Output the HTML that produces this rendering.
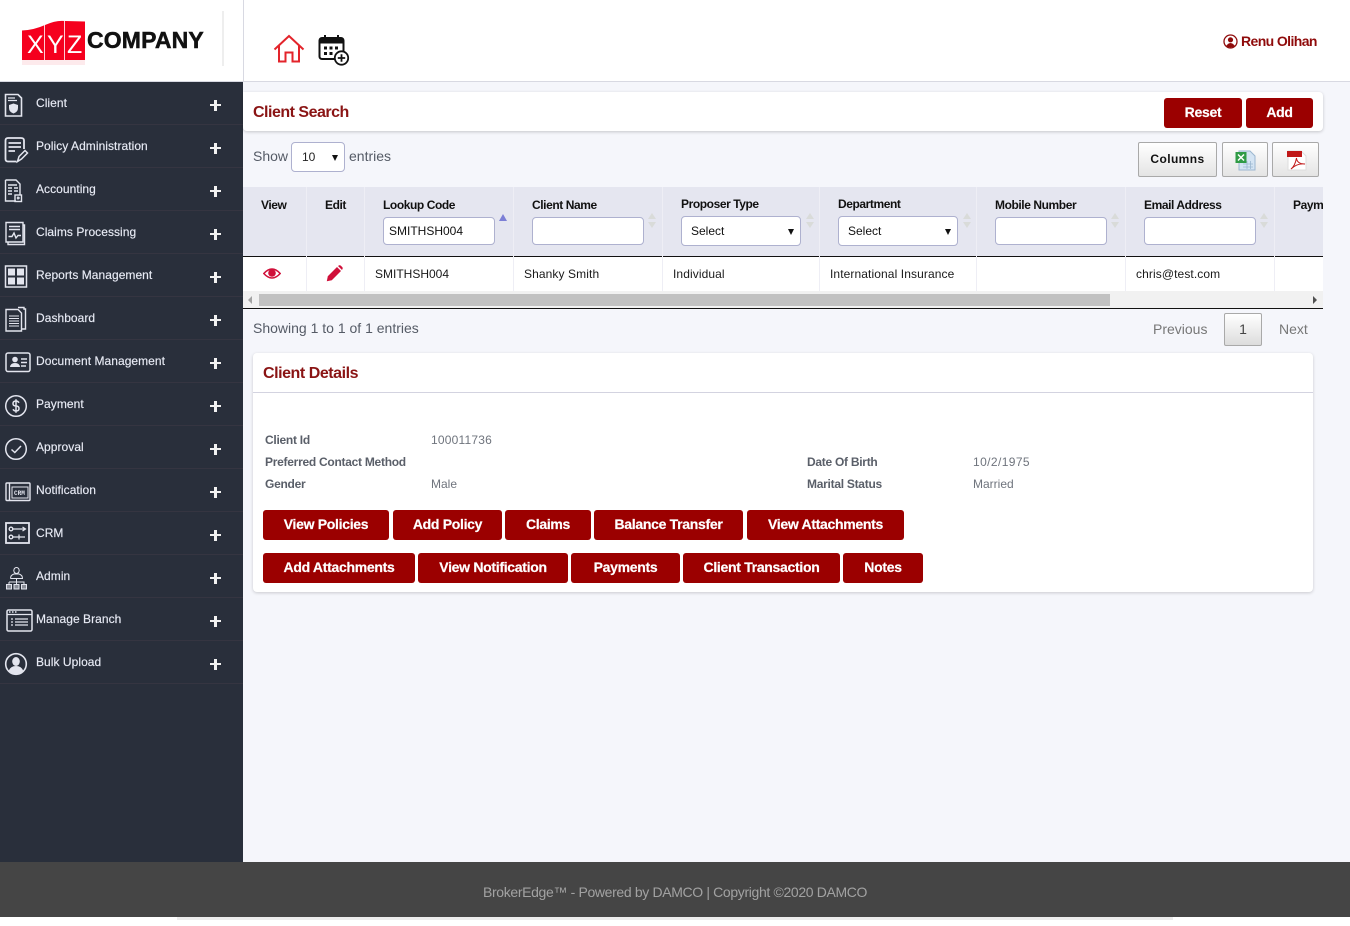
<!DOCTYPE html>
<html><head><meta charset="utf-8"><title>Client Search</title>
<style>
*{box-sizing:border-box}
html,body{margin:0;padding:0;width:1350px;height:926px;overflow:hidden;background:#fff;font-family:"Liberation Sans",sans-serif}
.a{position:absolute;white-space:nowrap}
#main{position:absolute;left:243px;top:82px;width:1107px;height:780px;background:#f5f6fb}
#side{position:absolute;left:0;top:82px;width:243px;height:780px;background:#292f3b}
.row{position:absolute;left:0;width:243px;height:43px;border-bottom:1px solid #353541}
.row span.t{position:absolute;left:36px;top:13px;font-size:12px;line-height:16px;color:#e8ebf5;white-space:nowrap;letter-spacing:.05px;-webkit-text-stroke:.15px #e8ebf5}
.row svg.i{position:absolute;left:4px;top:9px;width:24px;height:26px;fill:none;stroke:#e3e5ee;stroke-width:1.4;overflow:visible}
.plus{position:absolute;left:210px;top:18px;width:11px;height:11px}
.plus:before{content:"";position:absolute;left:0;top:4px;width:11px;height:2.4px;background:#f2f2f2}
.plus:after{content:"";position:absolute;left:4.3px;top:0;width:2.4px;height:11px;background:#f2f2f2}
.btn{position:absolute;height:30px;background:#9b0000;border-radius:3px;color:#fff;font-weight:bold;font-size:14px;line-height:29px;text-align:center;white-space:nowrap;letter-spacing:-.3px;-webkit-text-stroke:.2px #fff}
.gbtn{position:absolute;top:142px;height:35px;border:1px solid #a9a9a9;border-radius:2px;background:linear-gradient(#fff,#e4e4e4);text-align:center;font-size:12px;font-weight:bold;line-height:33px;color:#111;letter-spacing:.4px}
.th{position:absolute;font-size:12px;font-weight:bold;color:#111;white-space:nowrap;line-height:14px;letter-spacing:-.42px}
.vl{position:absolute;width:1px;background:#eeeef5}
.inp{position:absolute;height:28px;width:112px;top:217px;background:#fff;border:1px solid #aeb1cf;border-radius:4px;font-size:12px;line-height:26px;padding-left:5px;color:#111}
.sel{position:absolute;height:30px;width:120px;top:216px;background:#fff;border:1px solid #aeb1cf;border-radius:4px;font-size:12px;line-height:28px;padding-left:9px;color:#111}
.sel:after,.s10:after{content:"";position:absolute;right:6px;top:12px;border-left:3.5px solid transparent;border-right:3.5px solid transparent;border-top:6px solid #111}
.sort{position:absolute;width:8px;height:16px;top:213px}
.sort:before{content:"";position:absolute;left:0;top:0;border-left:4px solid transparent;border-right:4px solid transparent;border-bottom:6px solid #d9dbd9}
.sort:after{content:"";position:absolute;left:0;top:9px;border-left:4px solid transparent;border-right:4px solid transparent;border-top:6px solid #d9dbd9}
.td{position:absolute;top:267px;font-size:12px;line-height:15px;color:#1a1a1a;white-space:nowrap;letter-spacing:.1px}
.lb{position:absolute;font-size:12px;font-weight:bold;color:#5a5f69;line-height:14px;white-space:nowrap;letter-spacing:-.27px}
.vv{position:absolute;font-size:12px;color:#6f747d;line-height:14px;white-space:nowrap}
</style></head><body>

<!-- header -->
<div class="a" style="left:0;top:81px;width:1350px;height:1px;background:#d8d9e2"></div>
<div class="a" style="left:243px;top:0;width:1px;height:81px;background:#d8d9e2"></div>
<div class="a" style="left:222px;top:11px;width:2px;height:55px;background:#eeeeee"></div>
<svg class="a" style="left:22px;top:20px" width="64" height="46" viewBox="0 0 64 46">
<path d="M0 10.500Q12 10 23 5T43 1L63 1.500V40H0Z" fill="#f5001e"/>
<path d="M22.500 5V40M42.500 1V40" stroke="#fff" stroke-width=".8"/>
<rect x="0" y="40" width="63" height="5" fill="#fdeaec"/>
<text x="5" y="33" font-family="Liberation Sans" font-size="25" fill="#fff">X</text>
<text x="25" y="33" font-family="Liberation Sans" font-size="25" fill="#fff">Y</text>
<text x="45" y="33" font-family="Liberation Sans" font-size="25" fill="#fff">Z</text>
</svg>
<div class="a" style="left:87px;top:27px;font-size:23px;line-height:26px;font-weight:bold;color:#111;letter-spacing:.15px;-webkit-text-stroke:.5px #111">COMPANY</div>
<svg class="a" style="left:273px;top:34px" width="32" height="30" viewBox="0 0 32 30" fill="none" stroke="#e3242b" stroke-width="2">
<path d="M1.500 15.500L16 2L30.500 15.500M6 12V27.500H12.500V18.500H19.500V27.500H26V12"/></svg>
<svg class="a" style="left:318px;top:34px" width="32" height="32" viewBox="0 0 32 32">
<rect x="1.500" y="4" width="24" height="21" rx="2.500" fill="#fff" stroke="#111" stroke-width="2"/>
<rect x="1.500" y="4" width="24" height="5.500" fill="#111"/>
<path d="M7 1v5M20 1v5" stroke="#111" stroke-width="2"/>
<path d="M6 12.500h3v3h-3zM11.500 12.500h3v3h-3zM17 12.500h3v3h-3zM6 18h3v3h-3zM11.500 18h3v3h-3z" fill="#111"/>
<circle cx="23.500" cy="24" r="6.700" fill="#fff" stroke="#111" stroke-width="1.800"/>
<path d="M23.500 20.300v7.400M19.800 24h7.400" stroke="#111" stroke-width="1.800"/></svg>
<svg class="a" style="left:1223px;top:34px" width="15" height="15" viewBox="0 0 15 15">
<circle cx="7.500" cy="7.500" r="6.500" fill="#fff" stroke="#8f0b0b" stroke-width="1.300"/>
<circle cx="7.500" cy="5.800" r="2.600" fill="#8f0b0b"/><path d="M3 12q4.500-6 9 0q-4.500 3-9 0z" fill="#8f0b0b"/></svg>
<div class="a" style="left:1241px;top:33px;font-size:14px;line-height:16px;color:#8f0b0b;font-weight:bold;letter-spacing:-.6px">Renu Olihan</div>

<!-- sidebar -->
<div id="side">
<div class="row" style="top:0"><svg class="i" viewBox="0 0 24 26"><path d="M1.500 3.500H14L17.500 7V25H1.500Z" stroke-width="1.600"/><path d="M4 7h7M4 9.500h9" stroke-width="1.200"/><path d="M9.500 12.500l4.500 1.500v3q0 3.800-4.500 5.500q-4.500-1.700-4.500-5.500v-3z" fill="#e3e5ee" stroke="none"/></svg><span class="t">Client</span><i class="plus"></i></div>
<div class="row" style="top:43px"><svg class="i" style="top:12px" viewBox="0 0 24 26"><path d="M12.500 24.500H4Q1.500 24.500 1.500 22V3.500Q1.500 1 4 1H17Q20 1 20 3.500V12" stroke-width="1.800"/><path d="M4.500 6H17M4.500 10H17M4.500 14H11" stroke-width="1.700"/><path d="M13.500 24.500L15 19.500L21 13.500L23.500 16L17.500 22Z" stroke-width="1.500"/></svg><span class="t">Policy Administration</span><i class="plus"></i></div>
<div class="row" style="top:86px"><svg class="i" viewBox="0 0 24 26"><path d="M1.500 3H12L16 7V18M12 24H1.500V3" /><path d="M4 8h9M4 11h4M10 11h4M4 14h4M10 14h4M4 17h4"/><rect x="11" y="18" width="6.500" height="6.500"/><path d="M14 19.500v3M12.800 21h3"/></svg><span class="t">Accounting</span><i class="plus"></i></div>
<div class="row" style="top:129px"><svg class="i" viewBox="0 0 24 26"><path d="M2 2.500H19V22H2ZM19 5H20.500V24.500H4V22"/><path d="M5 6.500H16M5 9.500H16M4.500 16.500L8 16.500L10 13L12 18L14 15.500H17"/></svg><span class="t">Claims Processing</span><i class="plus"></i></div>
<div class="row" style="top:172px"><svg class="i" viewBox="0 0 24 26"><rect x="1.500" y="3" width="21" height="21" stroke-width="1.500"/><path d="M4 5.500h7v7H4zM13 5.500h7v7h-7zM4 14.500h7v7H4zM13 14.500h7v7h-7z" fill="#e3e5ee" stroke="none"/></svg><span class="t">Reports Management</span><i class="plus"></i></div>
<div class="row" style="top:215px"><svg class="i" viewBox="0 0 24 26"><path d="M2 3.500H14L17.500 7V25H2Z" stroke-width="1.400"/><path d="M14 1.500H20V3L21.500 3V23H17.500" /><path d="M5 10H15M5 12.500H15M5 15H15M5 17.500H15M5 20H15" stroke-width="1.100"/></svg><span class="t">Dashboard</span><i class="plus"></i></div>
<div class="row" style="top:258px"><svg class="i" style="left:5px;width:26px" viewBox="0 0 26 26"><rect x="1" y="4" width="24" height="18.500" rx="2" stroke-width="1.500"/><circle cx="10" cy="10.500" r="2.800" fill="#e3e5ee" stroke="none"/><path d="M5 18q.5-4 5-4t5 4z" fill="#e3e5ee" stroke="none"/><path d="M16 10H22M16 13.500H22M16 17H21" stroke-width="1.500"/></svg><span class="t">Document Management</span><i class="plus"></i></div>
<div class="row" style="top:301px"><svg class="i" style="left:5px" viewBox="0 0 24 26"><circle cx="11" cy="14" r="10.300" stroke-width="1.500"/><path d="M14 10.800Q13 9 11 9Q8 9 8 11.500T11 14T14 16.500T11 19Q9 19 8 17.200M11 7.300V20.700" stroke-width="1.500"/></svg><span class="t">Payment</span><i class="plus"></i></div>
<div class="row" style="top:344px"><svg class="i" style="left:5px" viewBox="0 0 24 26"><circle cx="11" cy="14" r="10.300" stroke-width="1.500"/><path d="M6.500 14.500L9.800 17.500L16 11" stroke-width="1.500"/></svg><span class="t">Approval</span><i class="plus"></i></div>
<div class="row" style="top:387px"><svg class="i" style="left:5px;width:26px" viewBox="0 0 26 26"><rect x="1" y="5" width="24" height="17.500" rx="1" stroke-width="1.400"/><path d="M4.500 5V22.500"/><rect x="7" y="9" width="16" height="11" stroke-width="1"/><text x="9" y="17" font-size="6" font-family="Liberation Mono" fill="#e3e5ee" stroke="none" font-weight="bold">CRM</text></svg><span class="t">Notification</span><i class="plus"></i></div>
<div class="row" style="top:430px"><svg class="i" style="left:5px;width:25px" viewBox="0 0 25 26"><rect x="1" y="2" width="23" height="20" stroke-width="1.800"/><circle cx="6" cy="8" r="1.800"/><circle cx="6" cy="16" r="1.800"/><path d="M8 8H20M17.500 6L20.500 8L17.500 10M8 16H20M14 13.500V18.500" stroke-width="1.200"/></svg><span class="t">CRM</span><i class="plus"></i></div>
<div class="row" style="top:473px"><svg class="i" viewBox="0 0 24 26" style="stroke-width:1"><path d="M12.500 3.500a2.700 3 0 1 1-.01 0zM6.500 14.500q0-3.500 3.500-4.500h5q3.500 1 3.500 4.500h-12M12.500 14.500V18M5 18H20V20M5 18V20M12.500 18V20"/><path d="M2.500 20.500H7.500V25H2.500ZM10 20.500H15V25H10ZM17.500 20.500H22.500V25H17.500Z" fill="#8a8e98"/></svg><span class="t">Admin</span><i class="plus"></i></div>
<div class="row" style="top:516px"><svg class="i" style="left:6px;width:26px" viewBox="0 0 26 26"><rect x="1" y="3" width="25" height="21" rx="1.500" stroke-width="1.500"/><path d="M1 7.500H26" stroke-width="1.200"/><path d="M3 5h1.500M6 5h1.500M9 5h1.500" stroke-width="1.400"/><path d="M5 12H7M5 15H7M5 18H7M9 12H22M9 15H22M9 18H22" stroke-width="1.300"/></svg><span class="t">Manage Branch</span><i class="plus"></i></div>
<div class="row" style="top:559px"><svg class="i" style="left:5px" viewBox="0 0 24 26"><circle cx="11" cy="14" r="10.300" stroke-width="1.600"/><ellipse cx="11" cy="11.500" rx="3.800" ry="4.500" fill="#e3e5ee" stroke="none"/><path d="M3.800 20.500q2-4.500 7.200-4.500t7.200 4.500q-3 3.500-7.200 3.500t-7.200-3.500z" fill="#e3e5ee" stroke="none"/></svg><span class="t">Bulk Upload</span><i class="plus"></i></div>
</div>

<div id="main"></div>

<!-- search bar -->
<div class="a" style="left:243px;top:92px;width:1080px;height:39px;background:#fff;border-radius:0 4px 4px 4px;box-shadow:0 1px 3px rgba(0,0,0,.2)"></div>
<div class="a" style="left:253px;top:103px;font-size:16px;line-height:20px;font-weight:bold;color:#8a1414;letter-spacing:-.5px">Client Search</div>
<div class="btn" style="left:1164px;top:98px;width:78px">Reset</div>
<div class="btn" style="left:1246px;top:98px;width:67px">Add</div>

<div class="a" style="left:253px;top:148px;font-size:14px;line-height:16px;color:#555b66">Show</div>
<div class="a s10" style="left:291px;top:142px;width:54px;height:30px;background:#fff;border:1px solid #aeb1cf;border-radius:4px;font-size:12px;line-height:28px;padding-left:10px;color:#222">10</div>
<div class="a" style="left:349px;top:148px;font-size:14px;line-height:16px;color:#555b66">entries</div>

<div class="gbtn" style="left:1138px;width:79px">Columns</div>
<div class="gbtn" style="left:1222px;width:46px"><svg style="position:absolute;left:12px;top:7px" width="21" height="21" viewBox="0 0 21 21"><path d="M4 1H15L20 6V20H4Z" fill="#d4e4f3" stroke="#9bb6d0"/><rect x="0.500" y="2" width="11" height="11" fill="#2f9b46"/><path d="M3 4.500L9 10.500M9 4.500L3 10.500" stroke="#fff" stroke-width="1.500"/><path d="M8 14h10M8 17h10M12 11v8M15.500 11v8" stroke="#9bb6d0" stroke-width=".8"/></svg></div>
<div class="gbtn" style="left:1272px;width:47px"><svg style="position:absolute;left:13px;top:7px" width="21" height="21" viewBox="0 0 21 21"><path d="M2 1H15L20 6V20H2Z" fill="#fff" stroke="#ddd"/><rect x="1" y="1" width="15" height="6" fill="#c01818"/><path d="M5 19Q9 16 10.500 8Q11 14 19 14Q11 13 5 19Z" fill="none" stroke="#c01818" stroke-width="1"/></svg></div>

<!-- table -->
<div class="a" style="left:243px;top:187px;width:1080px;height:69px;background:#e5e6f0"></div>
<div class="a" style="left:243px;top:256px;width:1080px;height:1px;background:#111"></div>
<div class="a" style="left:243px;top:257px;width:1080px;height:34px;background:#fff"></div>
<div class="vl" style="left:306px;top:187px;height:104px"></div>
<div class="vl" style="left:364px;top:187px;height:104px"></div>
<div class="vl" style="left:513px;top:187px;height:104px"></div>
<div class="vl" style="left:662px;top:187px;height:104px"></div>
<div class="vl" style="left:819px;top:187px;height:104px"></div>
<div class="vl" style="left:976px;top:187px;height:104px"></div>
<div class="vl" style="left:1125px;top:187px;height:104px"></div>
<div class="vl" style="left:1274px;top:187px;height:104px"></div>

<div class="th" style="left:261px;top:198px">View</div>
<div class="th" style="left:325px;top:198px">Edit</div>
<div class="th" style="left:383px;top:198px">Lookup Code</div>
<div class="th" style="left:532px;top:198px">Client Name</div>
<div class="th" style="left:681px;top:197px">Proposer Type</div>
<div class="th" style="left:838px;top:197px">Department</div>
<div class="th" style="left:995px;top:198px">Mobile Number</div>
<div class="th" style="left:1144px;top:198px">Email Address</div>
<div class="th" style="left:1293px;top:198px;width:30px;overflow:hidden">Payment</div>

<div class="inp" style="left:383px">SMITHSH004</div>
<div class="a" style="left:499px;top:214px;border-left:4.500px solid transparent;border-right:4.500px solid transparent;border-bottom:7px solid #7c7fd6"></div>
<div class="inp" style="left:532px"></div><i class="sort" style="left:648px"></i>
<div class="sel" style="left:681px">Select</div><i class="sort" style="left:806px"></i>
<div class="sel" style="left:838px">Select</div><i class="sort" style="left:963px"></i>
<div class="inp" style="left:995px"></div><i class="sort" style="left:1111px"></i>
<div class="inp" style="left:1144px"></div><i class="sort" style="left:1260px"></i>

<svg class="a" style="left:263px;top:267px" width="18" height="13" viewBox="0 0 18 13"><path d="M.8 6.500Q9-2.500 17.200 6.500Q9 15.500.8 6.500Z" fill="#fff" stroke="#d0103a" stroke-width="1.500"/><circle cx="9" cy="6" r="3.800" fill="#d0103a"/></svg>
<svg class="a" style="left:326px;top:265px" width="17" height="17" viewBox="0 0 17 17"><path d="M.8 16.200L1.800 11.200L11 2L15 6L5.800 15.200Z" fill="#d0103a"/><path d="M12 1L13.200.3Q14 0 14.800.6L16.400 2.200Q17 3 16.600 3.800L16 5Z" fill="#d0103a"/></svg>
<div class="td" style="left:375px;letter-spacing:0">SMITHSH004</div>
<div class="td" style="left:524px">Shanky Smith</div>
<div class="td" style="left:673px">Individual</div>
<div class="td" style="left:830px">International Insurance</div>
<div class="td" style="left:1136px">chris@test.com</div>

<!-- scrollbar -->
<div class="a" style="left:243px;top:291px;width:1080px;height:17px;background:#f1f1f1"></div>
<div class="a" style="left:259px;top:294px;width:851px;height:12px;background:#c1c1c1"></div>
<div class="a" style="left:248px;top:296px;border-top:4px solid transparent;border-bottom:4px solid transparent;border-right:4px solid #a3a3a3"></div>
<div class="a" style="left:1313px;top:296px;border-top:4px solid transparent;border-bottom:4px solid transparent;border-left:4px solid #505050"></div>
<div class="a" style="left:243px;top:308px;width:1080px;height:1px;background:#111"></div>

<div class="a" style="left:253px;top:320px;font-size:14px;line-height:16px;color:#555b66">Showing 1 to 1 of 1 entries</div>
<div class="a" style="left:1153px;top:321px;font-size:14px;line-height:16px;color:#777">Previous</div>
<div class="a" style="left:1224px;top:313px;width:38px;height:33px;border:1px solid #a9a9a9;border-radius:2px;background:linear-gradient(#fff,#dcdcdc);text-align:center;font-size:14px;line-height:31px;color:#444">1</div>
<div class="a" style="left:1279px;top:321px;font-size:14px;line-height:16px;color:#777">Next</div>

<!-- details -->
<div class="a" style="left:253px;top:353px;width:1060px;height:239px;background:#fff;border-radius:4px;box-shadow:0 1px 3px rgba(0,0,0,.18)"></div>
<div class="a" style="left:253px;top:392px;width:1060px;height:1px;background:#d3d3e0"></div>
<div class="a" style="left:263px;top:364px;font-size:16px;line-height:20px;font-weight:bold;color:#8a1414;letter-spacing:-.45px">Client Details</div>

<div class="lb" style="left:265px;top:433px">Client Id</div><div class="vv" style="left:431px;top:433px;letter-spacing:.2px">100011736</div>
<div class="lb" style="left:265px;top:455px">Preferred Contact Method</div>
<div class="lb" style="left:265px;top:477px">Gender</div><div class="vv" style="left:431px;top:477px">Male</div>
<div class="lb" style="left:807px;top:455px">Date Of Birth</div><div class="vv" style="left:973px;top:455px;letter-spacing:.4px">10/2/1975</div>
<div class="lb" style="left:807px;top:477px">Marital Status</div><div class="vv" style="left:973px;top:477px">Married</div>

<div class="btn" style="left:263px;top:510px;width:126px">View Policies</div>
<div class="btn" style="left:393px;top:510px;width:109px">Add Policy</div>
<div class="btn" style="left:505px;top:510px;width:86px">Claims</div>
<div class="btn" style="left:594px;top:510px;width:149px">Balance Transfer</div>
<div class="btn" style="left:747px;top:510px;width:157px">View Attachments</div>
<div class="btn" style="left:263px;top:553px;width:152px">Add Attachments</div>
<div class="btn" style="left:418px;top:553px;width:150px">View Notification</div>
<div class="btn" style="left:571px;top:553px;width:109px">Payments</div>
<div class="btn" style="left:683px;top:553px;width:157px">Client Transaction</div>
<div class="btn" style="left:843px;top:553px;width:80px">Notes</div>

<!-- footer -->
<div class="a" style="left:177px;top:917px;width:996px;height:3px;background:#ececec"></div>
<div class="a" style="left:0;top:862px;width:1350px;height:55px;background:#454545"></div>
<div class="a" style="left:483px;top:884px;font-size:14px;line-height:16px;color:#a2a2a2;letter-spacing:-.35px">BrokerEdge™ - Powered by DAMCO | Copyright ©2020 DAMCO</div>
</body></html>
